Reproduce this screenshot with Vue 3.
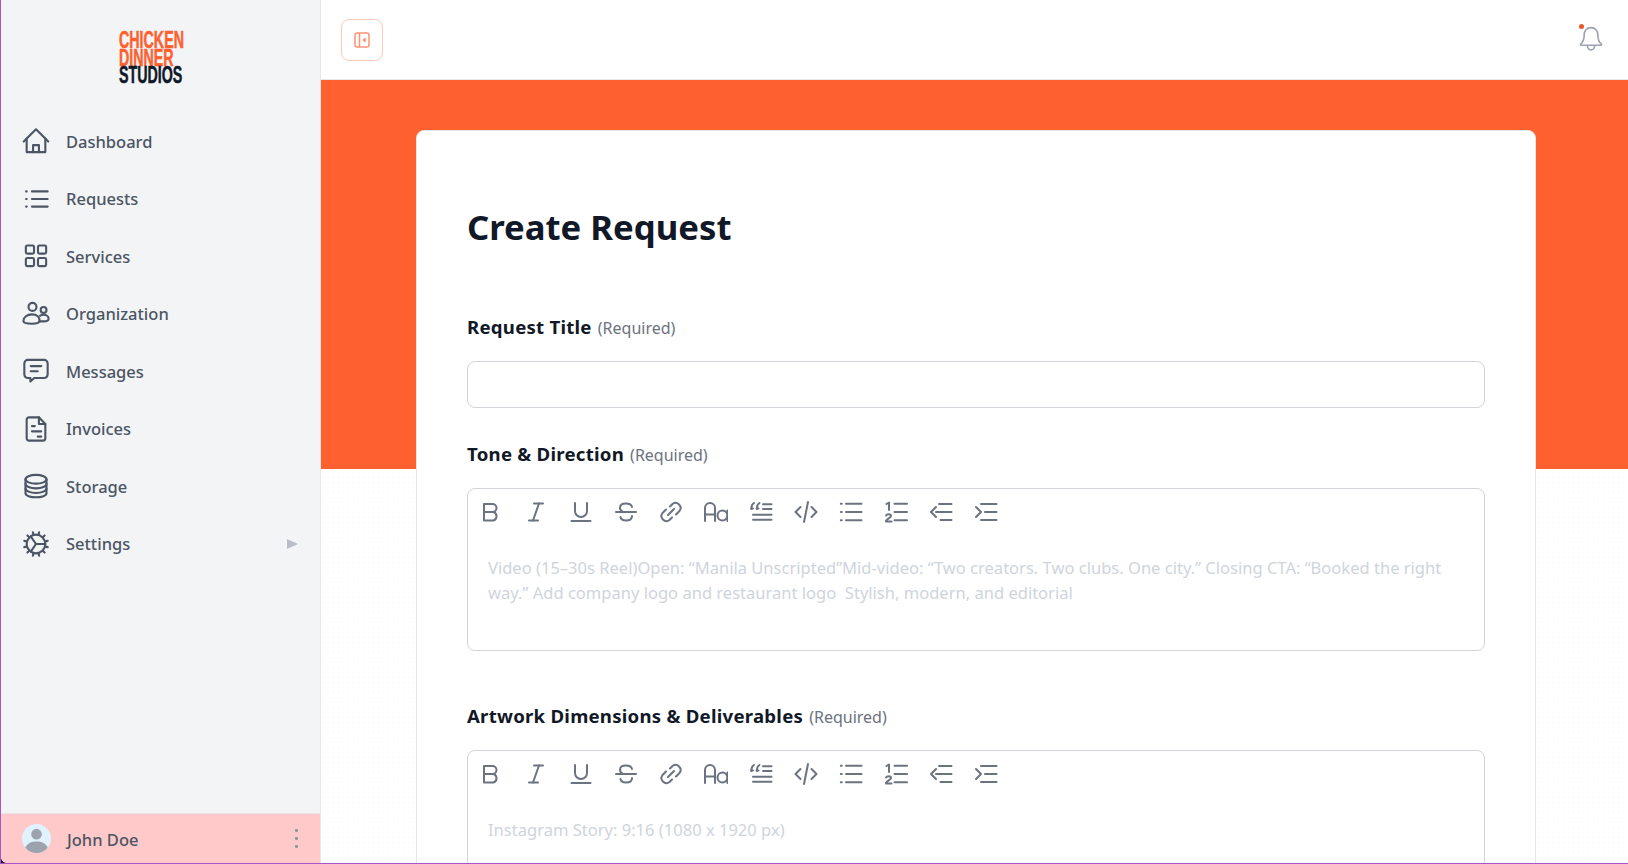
<script setup>
const teeth = Array.from({ length: 12 }, (_, i) => {
  const a = (i * Math.PI) / 6 + Math.PI / 12
  const c = Math.cos(a)
  const s = Math.sin(a)
  return `M${(12 + 8.2 * c).toFixed(2)} ${(12 + 8.2 * s).toFixed(2)}L${(12 + 10.4 * c).toFixed(2)} ${(12 + 10.4 * s).toFixed(2)}`
})
const square = (x, y) => `M${x + 1.2} ${y}h4.600a1.200 1.200 0 0 1 1.200 1.200v4.600a1.200 1.200 0 0 1-1.200 1.200h-4.600a1.200 1.200 0 0 1-1.200-1.200v-4.600a1.200 1.200 0 0 1 1.200-1.200z`
const nav = [
  { label: 'Dashboard', d: ['M1.500 12.500 12 2l10.500 10.500', 'M4 10v11.500h16V10', 'M9.500 21.500V15.500h5v6'] },
  { label: 'Requests', d: ['M8.500 5.500H22', 'M8.500 12H22', 'M8.500 18.500H22', 'M3.500 5.500h.5', 'M3.500 12h.5', 'M3.500 18.500h.5'] },
  { label: 'Services', d: [square(3.3, 3), square(13.7, 3), square(3.3, 13.7), square(13.7, 13.7)] },
  { label: 'Organization', d: ['M9 2.500a3.400 3.400 0 1 1 0 6.800A3.400 3.400 0 0 1 9 2.500z', 'M18.500 6a2.500 2.500 0 1 1 0 5 2.500 2.500 0 0 1 0-5z', 'M1.200 18c0-3.300 3.200-5.700 7.300-5.700s6.500 2.300 6.500 5.200c0 1.800-2.300 2.800-6.500 2.800S1.200 19.500 1.200 18z', 'M15.500 13.500c.8-.5 1.800-.8 2.800-.8 2.500 0 4.500 1.400 4.500 3.300 0 1.500-1.800 2.300-4.300 2.300h-3'] },
  { label: 'Messages', d: ['M5 2.500h14a3 3 0 0 1 3 3v9.500a3 3 0 0 1-3 3H10.500l-3.300 3V18H5a3 3 0 0 1-3-3V5.500a3 3 0 0 1 3-3z', 'M7.500 7.800h9', 'M7.500 12.200h6'] },
  { label: 'Invoices', d: ['M6 2h8.500L20 7.700V20a2 2 0 0 1-2 2H6a2 2 0 0 1-2-2V4a2 2 0 0 1 2-2z', 'M14.500 2v5.700H20', 'M8.500 9.500h2.500', 'M8.500 14h8', 'M13.500 18.500h3'] },
  { label: 'Storage', d: ['M12 2.500c5 0 9 1.600 9 3.700S17 10 12 10 3 8.300 3 6.200s4-3.700 9-3.700z', 'M3 6.200v12c0 2 4 3.500 9 3.500s9-1.500 9-3.500v-12', 'M3 10.200c0 2 4 3.800 9 3.800s9-1.800 9-3.800', 'M3 14.200c0 2 4 3.800 9 3.800s9-1.800 9-3.800'] },
  { label: 'Settings', arrow: true, d: ['M12 4a8 8 0 1 1 0 16 8 8 0 0 1 0-16z', 'M12 12 7.500 5.500', 'M12 12h8', 'M12 12l-4.500 6.500', ...teeth] }
]
const tools = [
  ['M5 4h8.500a4 4 0 0 1 0 8H5z', 'M5 12h9.500a4.500 4.500 0 0 1 0 8.500H5z'],
  ['M10 3.500h9', 'M5 20.500h9', 'M15 3.500 9 20.500'],
  ['M6 3v8a6 6 0 0 0 12 0V3', 'M2.500 21h19'],
  ['M2 12h20', 'M18 7c-.5-2.500-3-3.500-6-3.500-3.500 0-6 1.500-6 4.200 0 1.800 1 3.300 3 4.300', 'M6.500 17c.5 2.500 3 3.500 5.500 3.500 3.500 0 6-1.500 6-4.500'],
  ['M11 6.500 13.500 4a5 5 0 0 1 7 7L17 14.500', 'M13 17.500 10.500 20a5 5 0 0 1-7-7L7 9.500', 'M9 15l6-6'],
  ['M1 21V8a5 5 0 0 1 10 0v13', 'M1 14.500h10', 'M23.500 10.500V21', 'M23.500 15.500a5 5 0 1 1-10 0 5 5 0 0 1 10 0z'],
  ['M2 8.500h2', 'M2.500 9V7.500c0-2 .8-3.500 2.500-4.500', 'M7.500 8.500h2', 'M8 9V7.500c0-2 .8-3.500 2.500-4.500', 'M14 4.300h8.500', 'M14 9h8.500', 'M4 14.700h18.500', 'M4 19.700h18.500'],
  ['M6.500 7 1.500 12l5 5', 'M17.500 7l5 5-5 5', 'M14 2 10 22'],
  ['M7 3.700h15.500', 'M7 12h15.500', 'M7 20.300h15.500', 'M1.800 3.700h1', 'M1.800 12h1', 'M1.800 20.300h1'],
  ['M10.500 3.700H23', 'M10.500 12H23', 'M10.500 20.300H23', 'M2.500 4 5 2.500v7.500', 'M2 15.500c.5-1.500 5-2 5 .500 0 2-5 3-5 5.500h5.500'],
  ['M7 7 2 12l5 5', 'M10 4h12.500', 'M7 12h15.500', 'M11.500 20h11'],
  ['M2 7l5 5-5 5', 'M7 4h15.500', 'M11 12h11.500', 'M7 20h15.500']
]
</script>

<template>
  <div class="shell">
    <aside class="sidebar">
      <div class="logo">
        <span class="orange">CHICKEN</span>
        <span class="orange">DINNER</span>
        <span class="dark">STUDIOS</span>
      </div>
      <nav class="nav">
        <a v-for="item in nav" :key="item.label" class="nav-item">
          <svg class="nav-icon" viewBox="0 0 24 24" fill="none" stroke="currentColor" stroke-width="1.800" stroke-linecap="round" stroke-linejoin="round">
            <path v-for="p in item.d" :key="p" :d="p" />
          </svg>
          <span>{{ item.label }}</span>
          <i v-if="item.arrow" class="arrow"></i>
        </a>
      </nav>
      <div class="user">
        <svg class="avatar" viewBox="0 0 30 30">
          <circle cx="15" cy="15" r="15" fill="#e0f2fe" />
          <circle cx="15" cy="10.500" r="5.500" fill="#9ca3af" />
          <path d="M3.500 24.500C5 20 9.500 18 15 18s10 2 11.500 6.500A15 15 0 0 1 15 30 15 15 0 0 1 3.500 24.500z" fill="#9ca3af" />
        </svg>
        <span class="user-name">John Doe</span>
        <span class="dots"><i></i><i></i><i></i></span>
      </div>
    </aside>

    <div class="content">
      <header class="topbar">
        <button class="toggle" aria-label="Toggle sidebar">
          <svg viewBox="0 0 16 16" width="16" height="16" fill="none" stroke="#ff9474" stroke-width="1.500" stroke-linejoin="round">
            <rect x="1" y="1" width="14" height="14" rx="2" />
            <path d="M5.500 1v14" />
            <path d="M11 6.500 9.300 8l1.700 1.500z" fill="#ff9474" />
          </svg>
        </button>
        <div class="bell">
          <svg viewBox="0 0 24 24" width="26" height="26" fill="none" stroke="#9ca3af" stroke-width="1.500" stroke-linejoin="round">
            <path d="M12 1.500c-4 0-6.300 3-6.300 6.500 0 4.500-.7 6.700-3.500 9 0 .5 .3 .8 1 .8h17.600c.7 0 1-.3 1-.8-2.800-2.300-3.500-4.500-3.500-9 0-3.500-2.300-6.500-6.300-6.500z" />
            <path d="M8.500 18c.3 2.200 1.700 4 3.500 4s3.200-1.800 3.500-4" />
          </svg>
          <i class="bell-dot"></i>
        </div>
      </header>

      <main class="main">
        <div class="band"></div>
        <section class="card">
          <h1>Create Request</h1>

          <label class="field-label first">Request Title <small>(Required)</small></label>
          <div class="input"></div>

          <label class="field-label second">Tone &amp; Direction <small>(Required)</small></label>
          <div class="editor">
            <div class="toolbar">
              <span v-for="(t, i) in tools" :key="i" class="tool">
                <svg viewBox="0 0 24 24" width="24" height="24" fill="none" stroke="#6b7280" stroke-width="2" stroke-linecap="round" stroke-linejoin="round">
                  <path v-for="p in t" :key="p" :d="p" />
                </svg>
              </span>
            </div>
            <div class="placeholder">Video (15–30s Reel)Open: “Manila Unscripted”Mid-video: “Two creators. Two clubs. One city.” Closing CTA: “Booked the right way.” Add company logo and restaurant logo&nbsp; Stylish, modern, and editorial</div>
          </div>

          <label class="field-label third">Artwork Dimensions &amp; Deliverables <small>(Required)</small></label>
          <div class="editor">
            <div class="toolbar">
              <span v-for="(t, i) in tools" :key="i" class="tool">
                <svg viewBox="0 0 24 24" width="24" height="24" fill="none" stroke="#6b7280" stroke-width="2" stroke-linecap="round" stroke-linejoin="round">
                  <path v-for="p in t" :key="p" :d="p" />
                </svg>
              </span>
            </div>
            <div class="placeholder">Instagram Story: 9:16 (1080 x 1920 px)</div>
          </div>
        </section>
      </main>
    </div>
    <i class="corner"></i>
  </div>
</template>

<style>
html, body { margin: 0; height: 100%; overflow: hidden; background: #fff; }
</style>

<style scoped>
.shell {
  position: relative;
  display: flex;
  height: 864px;
  overflow: hidden;
  box-sizing: border-box;
  border-left: 1px solid #a855c7;
  border-bottom: 1px solid #a855c7;
  font-family: "Noto Sans", "Open Sans", sans-serif;
}
.corner {
  position: absolute;
  left: 0;
  bottom: 0;
  width: 5px;
  height: 5px;
  background: radial-gradient(circle at 100% 0, transparent 4.500px, #1f1430 5px);
}
.sidebar {
  width: 320px;
  flex: none;
  box-sizing: border-box;
  display: flex;
  flex-direction: column;
  background: #f3f4f6;
  border-right: 1px solid #e5e7eb;
}
.logo {
  display: flex;
  flex-direction: column;
  align-items: flex-start;
  height: 86px;
  padding: 32px 0 0 118px;
  box-sizing: border-box;
  font-family: "Liberation Sans", sans-serif;
  font-weight: 700;
  font-size: 23px;
  line-height: 17.500px;
}
.logo span {
  display: block;
  transform: scaleX(.62);
  transform-origin: left center;
  -webkit-text-stroke: .5px currentColor;
}
.orange { color: #ff6030; }
.dark { color: #111827; }
.nav { display: flex; flex-direction: column; margin-top: 26.500px; }
.nav-item {
  height: 57.500px;
  display: flex;
  align-items: center;
  gap: 16px;
  padding: 0 21px 0 21px;
  color: #4b5563;
  font-size: 16.500px;
  font-weight: 500;
}
.nav-icon { width: 28px; height: 28px; flex: none; }
.arrow {
  margin-left: auto;
  margin-right: 1px;
  width: 0;
  height: 0;
  border-left: 11px solid #b8bdc9;
  border-top: 5.500px solid transparent;
  border-bottom: 5.500px solid transparent;
}
.user {
  margin-top: auto;
  height: 50px;
  display: flex;
  align-items: center;
  gap: 16px;
  padding: 2px 22px 0 21px;
  background: #ffc9c9;
  border-top: 1px solid #e9e3e6;
  box-sizing: border-box;
  color: #4b5563;
  font-size: 16.500px;
  font-weight: 500;
}
.avatar { width: 29px; height: 29px; flex: none; margin-top: -2px; }
.dots { margin-left: auto; display: flex; flex-direction: column; gap: 5px; margin-top: -2px; }
.dots i { width: 3px; height: 3px; border-radius: 1px; background: #8f96a3; }

.content { flex: 1; min-width: 0; display: flex; flex-direction: column; }
.topbar {
  height: 80px;
  flex: none;
  box-sizing: border-box;
  display: flex;
  align-items: center;
  justify-content: space-between;
  padding: 0 24px 0 20px;
  background: #fff;
  border-bottom: 1px solid #e5e7eb;
}
.toggle {
  width: 42px;
  height: 42px;
  margin-top: 1px;
  padding: 0;
  display: flex;
  align-items: center;
  justify-content: center;
  background: #fff;
  border: 1px solid #ffc9bb;
  border-radius: 8px;
}
.bell { position: relative; width: 26px; height: 26px; margin-top: -1px; }
.bell-dot {
  position: absolute;
  left: 1px;
  top: -2px;
  width: 5px;
  height: 5px;
  border-radius: 50%;
  background: #e8562a;
}
.main {
  position: relative;
  flex: 1;
  min-height: 0;
  overflow: hidden;
  padding: 50px 92px 0 95px;
  background-color: #fff;
  background-image: radial-gradient(#f4f5f8 .7px, transparent .8px);
  background-size: 5px 5px;
}
.band {
  position: absolute;
  left: 0;
  right: 0;
  top: 0;
  height: 389px;
  background: #ff6030;
}
.card {
  position: relative;
  box-sizing: border-box;
  padding: 74px 50px 0;
  background: #fff;
  border: 1px solid #e5e7eb;
  border-radius: 8px 8px 0 0;
  min-height: 800px;
}
h1 {
  margin: 0;
  color: #111827;
  font-size: 34.700px;
  line-height: 44px;
  font-weight: 700;
}
.field-label {
  display: block;
  color: #111827;
  font-size: 18.600px;
  letter-spacing: .25px;
  line-height: 24px;
  font-weight: 700;
  margin-bottom: 21px;
}
.field-label small { color: #6b7280; font-size: 16px; font-weight: 400; letter-spacing: 0; margin-left: 1px; }
.first { margin-top: 66px; }
.second { margin-top: 34px; }
.third { margin-top: 53px; }
.input {
  height: 47px;
  box-sizing: border-box;
  background: #fff;
  border: 1px solid #d1d5db;
  border-radius: 8px;
}
.editor {
  min-height: 163px;
  box-sizing: border-box;
  background: #fff;
  border: 1px solid #d1d5db;
  border-radius: 8px;
}
.toolbar { display: flex; height: 46px; align-items: center; }
.tool { width: 45px; flex: none; display: flex; justify-content: center; }
.placeholder {
  padding: 20px 20px 0;
  color: #cfd4dc;
  font-size: 16.550px;
  line-height: 25px;
  font-weight: 400;
}
</style>
